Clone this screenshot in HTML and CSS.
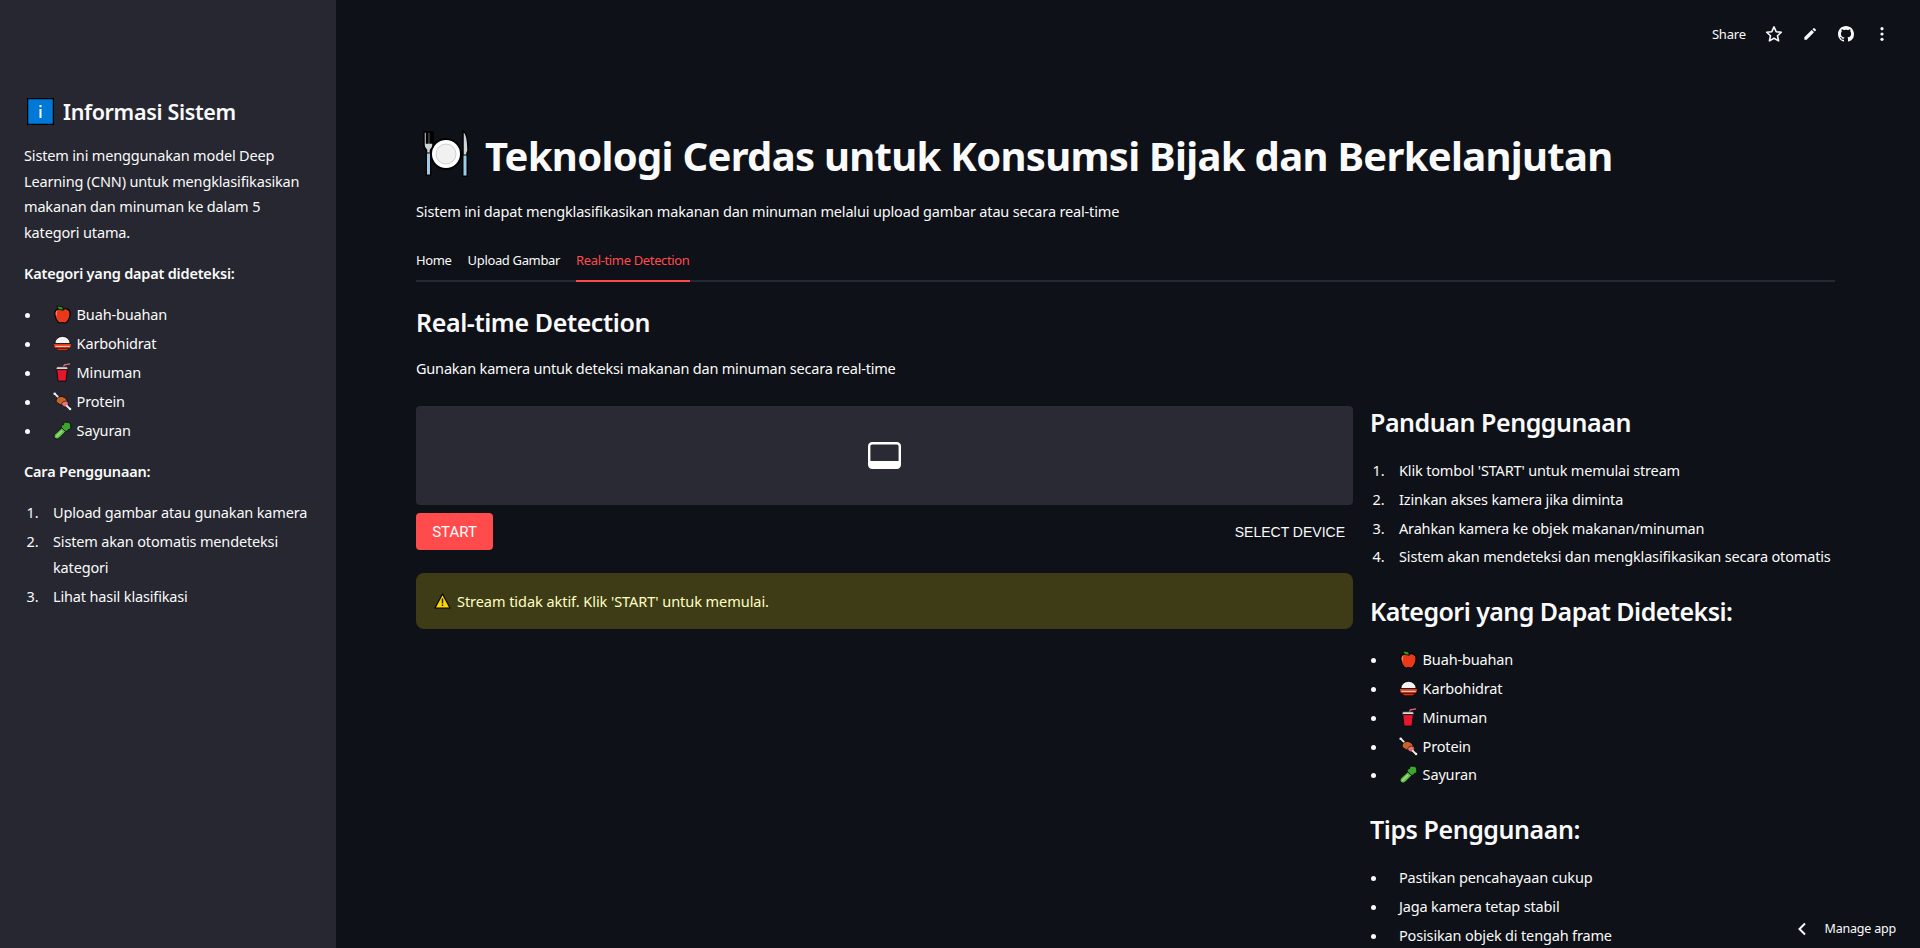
FILE: index.html
```html
<!DOCTYPE html>
<html lang="id">
<head>
<meta charset="utf-8">
<title>Teknologi Cerdas untuk Konsumsi Bijak dan Berkelanjutan</title>
<link rel="stylesheet" href="styles.css">
</head>
<body>
<svg class="defs" width="0" height="0" aria-hidden="true">
  <symbol id="e-apple" viewBox="0 0 20 20">
    <path d="M10 5C7 3 2 4 2 9c0 5 3 10 5.500 10 1 0 1.500-.6 2.500-.6s1.500.6 2.500.6C15 19 18 14 18 9c0-5-5-6-8-4z" fill="#e8391d" stroke="#000" stroke-width="1.200"/>
    <path d="M4 6c-.800 1.500-.800 3.500-.3 5" stroke="#ff8a5c" stroke-width="1.200" fill="none"/>
    <path d="M4 .8l6 1.200 1 3.500-5-.8z" fill="#2f9a1c" stroke="#000" stroke-width=".8"/>
  </symbol>
  <symbol id="e-rice" viewBox="0 0 20 20">
    <path d="M2 10a8 7.500 0 0 1 16 0z" fill="#f4f4f4" stroke="#000" stroke-width=".8"/>
    <path d="M1 10.500h18c0 2-.5 3.500-1.500 4.500h-15C1.500 14 1 12.500 1 10.500z" fill="#e33b1a"/>
    <path d="M2.500 13h15" stroke="#f6e6dd" stroke-width="1"/>
    <path d="M2.800 15h14.400c-1 1.500-2.500 2.500-4.200 2.500H7c-1.700 0-3.200-1-4.200-2.500z" fill="#d7321a" stroke="#000" stroke-width=".6"/>
  </symbol>
  <symbol id="e-cup" viewBox="0 0 20 20">
    <path d="M10 6l2-4 6-1" fill="none" stroke="#e56a78" stroke-width="1.300"/>
    <path d="M4 4h11l1 3H3z" fill="#d9d9d9" stroke="#000" stroke-width=".6"/>
    <path d="M4 7h11l-1.300 12H5.300z" fill="#e3182d" stroke="#000" stroke-width=".8"/>
  </symbol>
  <symbol id="e-meat" viewBox="0 0 20 20">
    <path d="M2 2l5 5" stroke="#eee" stroke-width="2"/>
    <circle cx="1.800" cy="1.800" r="1.400" fill="#eee"/>
    <path d="M5 6c3-2.500 7-1 9 1.500 2 2.500 1.500 6-1 6.500-3 .5-8-1-9.500-4C3 8.500 4 7 5 6z" fill="#c4622a" stroke="#000" stroke-width=".8"/>
    <path d="M9 12.500c1-2.500 4-3.500 6-2.500 1.500 1 1.500 4 0 5-2 1.500-5 0-6-2.500z" fill="#ea6f78" stroke="#000" stroke-width=".6"/>
    <path d="M14 14l4 4" stroke="#eee" stroke-width="2"/>
    <circle cx="18" cy="18" r="1.300" fill="#eee"/>
  </symbol>
  <symbol id="e-celery" viewBox="0 0 20 20">
    <path d="M2 18c-1.500-1.500-1-3 .5-4.500l7-6.500 4 4-6.500 6.500C5 19 3.500 19.500 2 18z" fill="#63c04a" stroke="#000" stroke-width=".8"/>
    <path d="M3.500 16.500l6-6" stroke="#a7e58c" stroke-width="1.300"/>
    <path d="M9 7c-1-2 .5-3 2-3 0-2 2-3.500 4-2.500 2-.5 4 1.500 3.500 3.500 1 2-.5 4-2.500 4 0 1.500-2 2.500-3.500 1.500z" fill="#3ba52e" stroke="#000" stroke-width=".8"/>
  </symbol>
</svg>

<div class="app">
  <aside class="sidebar">
    <h2 class="side-title">
      <svg class="info-icon" viewBox="0 0 27 27" aria-hidden="true"><rect x=".5" y=".5" width="26" height="26" fill="#0078d7" stroke="#000" stroke-width="1.500"/><rect x="12.500" y="7" width="2" height="2.200" fill="#fff"/><rect x="12.500" y="11" width="2" height="9" fill="#fff"/></svg>
      Informasi Sistem
    </h2>
    <p class="side-intro">Sistem ini menggunakan model Deep Learning (CNN) untuk mengklasifikasikan makanan dan minuman ke dalam 5 kategori utama.</p>
    <p class="side-label">Kategori yang dapat dideteksi:</p>
    <ul class="side-cats">
      <li><svg class="emoji"><use href="#e-apple"/></svg> Buah-buahan</li>
      <li><svg class="emoji"><use href="#e-rice"/></svg> Karbohidrat</li>
      <li><svg class="emoji"><use href="#e-cup"/></svg> Minuman</li>
      <li><svg class="emoji"><use href="#e-meat"/></svg> Protein</li>
      <li><svg class="emoji"><use href="#e-celery"/></svg> Sayuran</li>
    </ul>
    <p class="side-label side-label-2">Cara Penggunaan:</p>
    <ol class="side-steps">
      <li>Upload gambar atau gunakan kamera</li>
      <li>Sistem akan otomatis mendeteksi kategori</li>
      <li>Lihat hasil klasifikasi</li>
    </ol>
  </aside>

  <main class="main">
    <h1 class="title">
      <svg class="title-icon" viewBox="0 0 48 50" aria-hidden="true">
        <circle cx="24" cy="25" r="15" fill="#fff" stroke="#000" stroke-width="2"/>
        <circle cx="24" cy="25" r="10" fill="#f1f1f1" stroke="#d0d0d0" stroke-width="1"/>
        <path d="M2 3v13c0 3 1.500 4 2.500 5v25h4V21c1-1 2.500-2 2.500-5V3H9.500v11H8V3H6v11H4.500V3z" fill="#cfd3d6" stroke="#000" stroke-width="1.500"/>
        <path d="M4.500 24h4v22h-4z" fill="#9ccbe8" stroke="#000" stroke-width="1"/>
        <path d="M41 2c4 2 5 9 5 20l-1 2v23h-4z" fill="#cfd3d6" stroke="#000" stroke-width="1.500"/>
        <path d="M41 26h4v21h-4z" fill="#9ccbe8" stroke="#000" stroke-width="1"/>
      </svg>
      <span class="title-text">Teknologi Cerdas untuk Konsumsi Bijak dan Berkelanjutan</span>
    </h1>
    <p class="subtitle">Sistem ini dapat mengklasifikasikan makanan dan minuman melalui upload gambar atau secara real-time</p>

    <nav class="tabs">
      <span class="tab">Home</span>
      <span class="tab">Upload Gambar</span>
      <span class="tab tab-active">Real-time Detection</span>
    </nav>

    <h2 class="section-title">Real-time Detection</h2>
    <p class="section-text">Gunakan kamera untuk deteksi makanan dan minuman secara real-time</p>

    <div class="columns">
      <section class="left">
        <div class="video">
          <svg class="video-icon" viewBox="0 0 33 27" aria-hidden="true"><rect x="1.200" y="1.200" width="30.600" height="24.600" rx="3" fill="none" stroke="#fff" stroke-width="2.400"/><path d="M1.500 19h30v5a2 2 0 0 1-2 2h-26a2 2 0 0 1-2-2z" fill="#fff"/></svg>
        </div>
        <div class="controls">
          <button class="start" type="button">START</button>
          <span class="select">SELECT DEVICE</span>
        </div>
        <div class="warning">
          <svg class="warn-icon" viewBox="0 0 17 16" aria-hidden="true"><path d="M8.500 1L16 15H1z" fill="#fcd700" stroke="#000" stroke-width="1.200" stroke-linejoin="round"/><path d="M8.500 5.500v5M8.500 11.500v1.500" stroke="#222" stroke-width="1.500"/></svg>
          <span class="warn-text">Stream tidak aktif. Klik 'START' untuk memulai.</span>
        </div>
      </section>

      <section class="right">
        <h2 class="r-title r-title-first">Panduan Penggunaan</h2>
        <ol class="r-list">
          <li>Klik tombol 'START' untuk memulai stream</li>
          <li>Izinkan akses kamera jika diminta</li>
          <li>Arahkan kamera ke objek makanan/minuman</li>
          <li>Sistem akan mendeteksi dan mengklasifikasikan secara otomatis</li>
        </ol>
        <h2 class="r-title r-title-tight">Kategori yang Dapat Dideteksi:</h2>
        <ul class="r-list">
          <li><svg class="emoji"><use href="#e-apple"/></svg> Buah-buahan</li>
          <li><svg class="emoji"><use href="#e-rice"/></svg> Karbohidrat</li>
          <li><svg class="emoji"><use href="#e-cup"/></svg> Minuman</li>
          <li><svg class="emoji"><use href="#e-meat"/></svg> Protein</li>
          <li><svg class="emoji"><use href="#e-celery"/></svg> Sayuran</li>
        </ul>
        <h2 class="r-title">Tips Penggunaan:</h2>
        <ul class="r-list">
          <li>Pastikan pencahayaan cukup</li>
          <li>Jaga kamera tetap stabil</li>
          <li>Posisikan objek di tengah frame</li>
        </ul>
      </section>
    </div>

    <div class="toolbar">
      <span class="share">Share</span>
      <svg class="tool" viewBox="0 0 24 24" aria-hidden="true"><path d="M12 3.500l2.600 5.700 6.200.7-4.600 4.200 1.300 6.100L12 17.100l-5.500 3.100 1.300-6.100-4.600-4.200 6.200-.7z" fill="none" stroke="#fafafa" stroke-width="1.900" stroke-linejoin="round"/></svg>
      <svg class="tool tool-small" viewBox="0 0 24 24" aria-hidden="true"><path d="M4 20v-3.500L15 5.500 18.500 9 7.500 20zM16.200 4.300l1.500-1.500a1 1 0 0 1 1.400 0l2.100 2.100a1 1 0 0 1 0 1.400l-1.500 1.500z" fill="#fafafa" transform="translate(-.5 .5)"/></svg>
      <svg class="tool tool-git" viewBox="0 0 16 16" aria-hidden="true"><path fill="#fafafa" d="M8 0C3.580 0 0 3.580 0 8c0 3.540 2.290 6.530 5.470 7.590.4.070.55-.17.55-.38 0-.19-.01-.82-.01-1.490-2.010.37-2.530-.49-2.690-.94-.09-.23-.48-.94-.82-1.130-.28-.15-.68-.52-.01-.53.63-.01 1.080.58 1.230.82.720 1.210 1.870.87 2.330.66.070-.52.280-.87.510-1.070-1.780-.2-3.640-.89-3.640-3.950 0-.87.310-1.590.820-2.150-.08-.2-.36-1.020.08-2.120 0 0 .67-.21 2.200.82.640-.18 1.320-.27 2-.27s1.360.09 2 .27c1.530-1.040 2.200-.82 2.200-.82.440 1.100.16 1.920.08 2.120.51.560.82 1.270.82 2.150 0 3.070-1.870 3.750-3.650 3.950.290.250.540.730.540 1.480 0 1.070-.01 1.930-.01 2.200 0 .21.150.46.550.38A8.010 8.010 0 0 0 16 8c0-4.420-3.580-8-8-8z"/></svg>
      <svg class="tool tool-small" viewBox="0 0 24 24" aria-hidden="true"><circle cx="12" cy="4" r="2.400" fill="#fafafa"/><circle cx="12" cy="12" r="2.400" fill="#fafafa"/><circle cx="12" cy="20" r="2.400" fill="#fafafa"/></svg>
    </div>
    <div class="manage">
      <svg class="chevron" viewBox="0 0 10 14" aria-hidden="true"><path d="M8 1.500L2.500 7 8 12.500" fill="none" stroke="#fafafa" stroke-width="2"/></svg>
      <span>Manage app</span>
    </div>
  </main>
</div>
</body>
</html>
```
FILE: styles.css
```css
* { box-sizing: border-box; }
html, body { margin: 0; height: 100%; overflow: hidden; }
body {
  background: #0e1117;
  color: #fafafa;
  font-family: "Noto Sans", "Open Sans", sans-serif;
  font-size: 14.5px;
  letter-spacing: -.16px;
}
.defs { position: absolute; }
.app { display: flex; height: 948px; }

/* Sidebar */
.sidebar {
  flex: 0 0 336px;
  background: #262730;
  padding: 93px 24px 0;
}
.side-title {
  display: flex;
  align-items: center;
  gap: 9px;
  margin: 0;
  height: 36px;
  font-size: 21.5px;
  font-weight: 600;
  letter-spacing: -.33px;
}
.info-icon { width: 27px; height: 27px; margin-left: 3px; }
.sidebar p, .sidebar li { line-height: 25.6px; }
.side-intro { margin: 14px 0 0; }
.side-label { margin: 16px 0 0; font-weight: 600; letter-spacing: -.2px; }
.side-label-2 { margin-top: 12px; }
.side-cats, .side-steps { margin: 15px 0 0; padding-left: 18px; }
.side-steps { margin-top: 15px; }
.side-cats li, .side-steps li { padding-left: 11px; }
.side-cats li { height: 29px; }
.side-steps li { margin-bottom: 4px; }

.emoji { width: 19px; height: 19px; margin-right: 1px; vertical-align: -4px; }

/* Main */
.main {
  position: relative;
  flex: 1;
  min-width: 0;
  padding: 127px 85px 0 80px;
  overflow: hidden;
}
.title {
  display: flex;
  align-items: center;
  gap: 15px;
  margin: 0;
  height: 60px;
  font-size: 40px;
  font-weight: 700;
  letter-spacing: -.7px;
  white-space: nowrap;
}
.title-text { margin-top: -4px; }
.title-icon { width: 48px; height: 50px; margin-left: 6px; margin-top: -6px; }
.subtitle { margin: 11px 0 0; line-height: 26px; }

.tabs {
  display: flex;
  gap: 16px;
  margin-top: 16px;
  height: 42px;
  border-bottom: 2px solid #262730;
}
.tab { font-size: 13px; line-height: 40px; height: 42px; letter-spacing: -.35px; }
.tab-active { color: #ff4b4b; border-bottom: 2px solid #ff4b4b; }

.section-title { margin: 20px 0 0; font-size: 25px; font-weight: 600; line-height: 40px; letter-spacing: -.4px; }
.section-text { margin: 13px 0 0; line-height: 26px; letter-spacing: -.2px; }

.columns {
  display: grid;
  grid-template-columns: 937px 1fr;
  gap: 17px;
  margin-top: 25px;
}
.video {
  display: flex;
  align-items: center;
  justify-content: center;
  height: 99px;
  background: #2a2a35;
  border-radius: 4px;
}
.video-icon { width: 33px; height: 27px; }
.controls {
  display: flex;
  align-items: center;
  justify-content: space-between;
  margin-top: 8px;
  padding-right: 8px;
  height: 37px;
}
.start {
  width: 77px;
  height: 37px;
  border: 0;
  border-radius: 4px;
  background: #ff4b4b;
  color: #fff;
  font: 15px Roboto, sans-serif;
}
.select { font: 14px "Liberation Sans", Arial, sans-serif; letter-spacing: 0; }
.warning {
  display: flex;
  align-items: center;
  gap: 6px;
  margin-top: 23px;
  height: 56px;
  padding-left: 18px;
  background: #3e3c16;
  border-radius: 8px;
  color: #ffffc2;
}
.warn-text { letter-spacing: -.05px; }
.warn-icon { width: 17px; height: 16px; }

.r-title { margin: 19px 0 0; font-size: 25px; font-weight: 600; line-height: 40px; letter-spacing: -.45px; white-space: nowrap; }
.r-title-first { margin-top: -4px; }
.r-title-tight { letter-spacing: -.55px; }
.r-list { margin: 15px 0 0; padding-left: 18px; }
.r-list li { height: 28.8px; line-height: 26px; padding-left: 11px; white-space: nowrap; }

/* Overlays */
.toolbar {
  position: absolute;
  top: 22px;
  right: 26px;
  display: flex;
  align-items: center;
  gap: 12px;
  height: 24px;
}
.share { font-size: 13px; margin-right: 4px; }
.tool { width: 24px; height: 24px; padding: 2px; }
.tool-small { padding: 4px; }
.tool-git { padding: 4px; }
.manage {
  position: absolute;
  right: 24px;
  bottom: 7px;
  display: flex;
  align-items: center;
  gap: 18px;
  font-size: 12.500px;
  letter-spacing: -.2px;
  line-height: 24px;
}
.chevron { width: 10px; height: 14px; }
```
